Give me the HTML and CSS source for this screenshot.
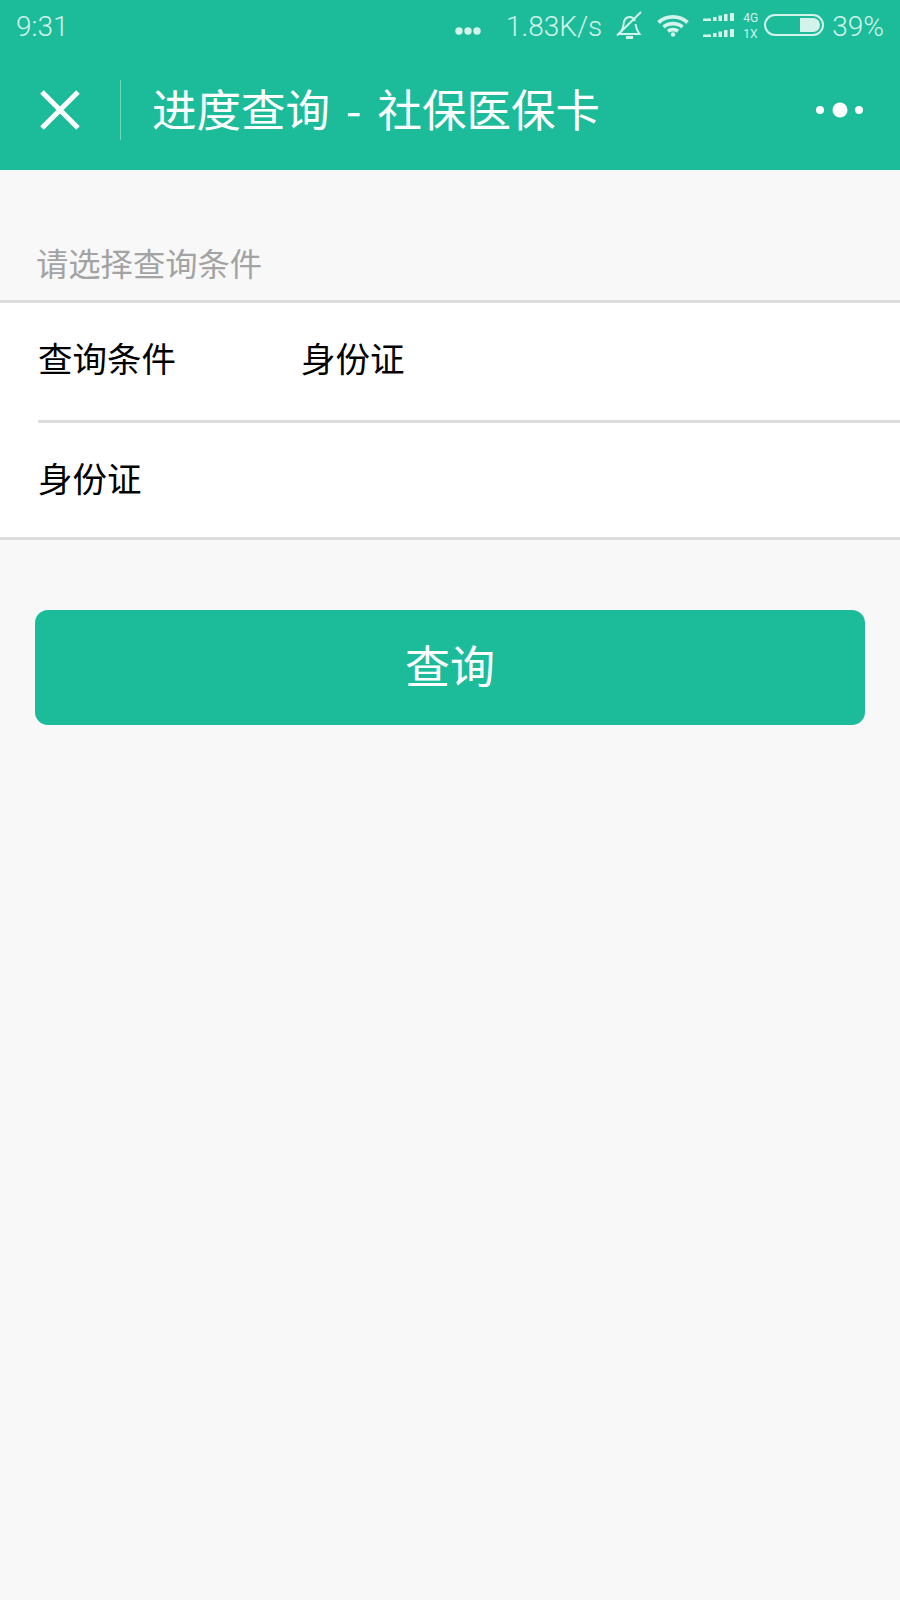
FILE: index.html
```html
<!DOCTYPE html>
<html lang="zh-CN">
<head>
    <meta http-equiv="content-type" content="text/html; charset=utf-8" />
    <title>进度查询 - 社保医保卡</title>
    <link rel="stylesheet" href="styles.css">
</head>

<body>
<div class="top">
    <div class="status">
        <span class="time">9:31</span>
        <div class="status-right">
            <svg class="more-small" width="26" height="8" viewBox="0 0 26 8"><circle cx="4" cy="4" r="3.700"/><circle cx="13" cy="4" r="3.700"/><circle cx="22" cy="4" r="3.700"/></svg>
            <span class="speed">1.83K/s</span>
            <svg class="bell" width="26" height="28" viewBox="0 0 26 28"><path d="M3 23c2.500-2.500 4-5 4.500-9.500C8 8.500 10.500 6 13.500 6c2.500 0 4.500 1.500 5.500 4M19.500 13c.5 4 2 7.500 4 10H3"/><path d="M25 1 1 24.500"/><path class="clapper" d="M10 26.500h7"/></svg>
            <svg class="wifi" width="32" height="23" viewBox="0 0 32 23"><path d="M1.500 8.500c8-7.500 21-7.500 29 0"/><path d="M6.500 13c5-4.500 14-4.500 19 0"/><path d="M11 17.200c2.500-2 7.500-2 10 0"/><circle class="wifi-dot" cx="16" cy="20.500" r="2.300"/></svg>
            <div class="signal">
                <svg width="32" height="8" viewBox="0 0 32 8"><path d="M0 5.500h8V8H0zM10 4h3.500v4H10zM15.500 2.500H19V8h-3.500zM21 1h3.500v7H21zM27 0h4v8h-4z"/></svg>
                <svg width="32" height="8" viewBox="0 0 32 8"><path d="M0 5.500h8V8H0zM10 4h3.500v4H10zM15.500 2.500H19V8h-3.500zM21 1h3.500v7H21zM27 0h4v8h-4z"/></svg>
            </div>
            <div class="net"><span>4G</span><span>1X</span></div>
            <div class="battery"><div class="battery-fill"></div></div>
            <span class="percent">39%</span>
        </div>
    </div>
    <div class="title-bar">
        <svg class="close" width="40" height="40" viewBox="0 0 40 40"><path d="M2 2 38 38M38 2 2 38"/></svg>
        <div class="title-line"></div>
        <h1 class="title">进度查询 - 社保医保卡</h1>
        <svg class="more" width="48" height="16" viewBox="0 0 48 16"><circle cx="4" cy="8" r="4"/><circle cx="24" cy="8" r="7.500"/><circle cx="43" cy="8" r="4"/></svg>
    </div>
</div>

<div class="content">
    <p class="section-label">请选择查询条件</p>
    <div class="form">
        <div class="row">
            <span class="row-label">查询条件</span>
            <span class="row-value">身份证</span>
        </div>
        <div class="row">
            <span class="row-label">身份证</span>
        </div>
    </div>
    <button class="submit">查询</button>
</div>
</body>
</html>
```

FILE: styles.css
```css
* {
    box-sizing: border-box;
}
body {
    margin: 0;
    height: 1600px;
    background: #f8f8f8;
    font-family: "Noto Sans CJK SC", "Noto Sans", sans-serif;
    overflow: hidden;
}

.top {
    background: #1cbc9a;
    height: 170px;
    color: #fff;
}
.status {
    height: 56px;
    padding: 0 16px 4px;
    display: flex;
    align-items: center;
    justify-content: space-between;
    color: #d4f3ea;
    font-family: Roboto, sans-serif;
    font-weight: 300;
    font-size: 28px;
}
.status-right {
    display: flex;
    align-items: center;
}
.status svg {
    display: block;
    fill: #d4f3ea;
    stroke: none;
}
.status svg.bell,
.status svg.wifi {
    fill: none;
    stroke: #d4f3ea;
}
.bell {
    stroke-width: 2;
}
.wifi {
    stroke-width: 3.800;
}
.status svg .clapper {
    stroke-width: 3;
}
.status svg .wifi-dot {
    fill: #d4f3ea;
    stroke: none;
}
.more-small {
    margin-top: 10px;
}
.speed {
    margin-left: 25px;
}
.status svg.bell {
    margin: 0 0 2px 14px;
}
.status svg.wifi {
    margin: 0 0 2px 15px;
}
.signal {
    margin: 0 0 2px 14px;
    display: flex;
    flex-direction: column;
    gap: 8px;
}
.net {
    width: 16px;
    margin-left: 8px;
    display: flex;
    flex-direction: column;
    font-size: 12px;
    font-weight: 400;
    line-height: 16px;
    white-space: nowrap;
}
.battery {
    margin: 0 0 3px 5px;
    width: 60px;
    height: 22px;
    border: 2px solid #d4f3ea;
    border-radius: 11px;
    padding: 2px;
    display: flex;
    justify-content: flex-end;
}
.battery-fill {
    width: 20px;
    background: #d4f3ea;
    border-radius: 0 8px 8px 0;
}
.percent {
    margin-left: 8px;
}

.title-bar {
    height: 114px;
    display: flex;
    align-items: center;
    padding: 0 36px 6px 40px;
}
.close {
    stroke: #fff;
    stroke-width: 5;
    fill: none;
}
.title-line {
    width: 1px;
    height: 60px;
    margin-left: 40px;
    background: #6fd5bd;
}
.title {
    margin: 0 0 4px 31px;
    flex: 1;
    font-size: 44.500px;
    font-weight: 400;
    line-height: 60px;
    word-spacing: 6px;
}
.more {
    fill: #fff;
}

.section-label {
    margin: 0;
    padding: 68px 0 0 36px;
    height: 130px;
    font-size: 32.300px;
    line-height: 48px;
    color: #a3a3a3;
}
.form {
    background: #fff;
    border-top: 3px solid #dcdcdc;
    border-bottom: 3px solid #dcdcdc;
}
.row {
    height: 117px;
    margin-left: 38px;
    padding-bottom: 9px;
    display: flex;
    align-items: center;
    font-size: 34.500px;
    color: #000;
}
.row + .row {
    padding-bottom: 7px;
    border-top: 3px solid #dcdcdc;
}
.row-label {
    width: 263px;
    flex: none;
}
.submit {
    display: block;
    width: 830px;
    height: 115px;
    margin: 70px 0 0 35px;
    padding: 0 0 6px;
    border: 0;
    border-radius: 13px;
    background: #1cbc9a;
    color: #fff;
    font-family: inherit;
    font-size: 45px;
}
```
